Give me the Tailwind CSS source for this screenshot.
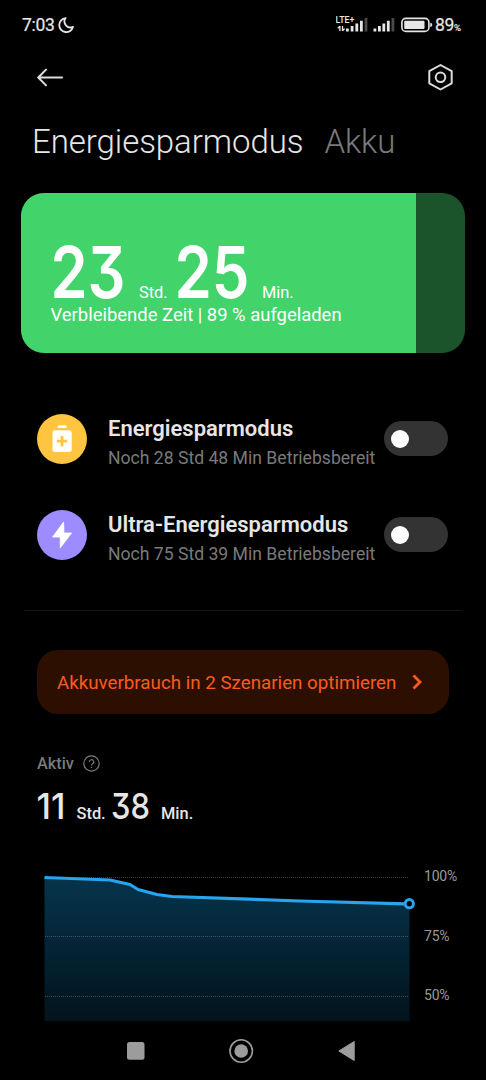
<!DOCTYPE html>
<html lang="de">
  <head>
    <meta charset="UTF-8" />
    <meta name="viewport" content="width=device-width, initial-scale=1.0" />
    <title>Energiesparmodus</title>
    <script src="https://cdn.jsdelivr.net/npm/@tailwindcss/browser@4"></script>
  </head>
  <body class="bg-black">
    <div class="w-[486px] h-[1080px] overflow-hidden bg-black text-[#e6e6e6] font-['Roboto',sans-serif] whitespace-nowrap flex flex-col">
      <!-- Status bar -->
      <div class="h-[50px] shrink-0 flex items-center pl-[22px]">
        <span class="text-[17.5px] tracking-[-0.3px] leading-none w-[36px] pt-[2px] [-webkit-text-stroke:0.2px_#e6e6e6]">7:03</span>
        <svg class="w-4 h-4 mt-[-1px]" viewBox="0 0 16 16" fill="none" stroke="#e6e6e6" stroke-width="1.8" stroke-linejoin="round">
          <path d="M7.6 1.1A7 7 0 1 0 15 9.8A5.9 5.9 0 0 1 7.6 1.1Z" />
        </svg>
        <svg class="w-[60px] h-[20px] ml-[262px]" viewBox="0 0 60 20" fill="#e6e6e6">
          <text x="-0.5" y="7.6" font-size="8.6" textLength="19" lengthAdjust="spacingAndGlyphs" font-family="Roboto" font-weight="500">LTE+</text>
          <path d="M3.9 11v5M6.5 11v5M1.8 13.4l2-2.2M8.6 13.6l-2 2.2" fill="none" stroke="#e6e6e6" stroke-width="1.3" />
          <path d="M10 13.5h2.8v3H10zM14.7 11h2.8v5.5h-2.8zM19.4 8.5h2.8v8h-2.8zM24 5.8h2.8v10.7H24z" />
          <path d="M28.6 3h2.8v13.5h-2.8z" fill="#4a4a4a" />
          <path d="M37.5 13.5h2.8v3h-2.8zM42 11h2.8v5.5H42zM46.4 8.5h2.8v8h-2.8zM50.9 5.8h2.8v10.7h-2.8z" />
          <path d="M55.5 3h2.8v13.5h-2.8z" fill="#4a4a4a" />
        </svg>
        <svg class="w-[32px] h-[16px] ml-[5px] mt-[-1px]" viewBox="0 0 32 16">
          <rect x="0.9" y="1.4" width="27" height="13" rx="4" fill="none" stroke="#e6e6e6" stroke-width="1.6" />
          <rect x="3.2" y="3.8" width="20.3" height="8.3" rx="1" fill="#e6e6e6" />
          <path d="M29.8 6.2a2 2 0 0 1 0 3.4z" fill="#e6e6e6" stroke="#e6e6e6" />
        </svg>
        <span class="text-[17.5px] tracking-[-0.4px] leading-none ml-[2px] pt-[2px] [-webkit-text-stroke:0.2px_#e6e6e6]">89<span class="text-[9.5px]">%</span></span>
      </div>

      <!-- App bar -->
      <div class="h-[54px] shrink-0 flex items-center justify-between pl-[37px] pr-[32px]">
        <svg class="w-[27px] h-[20px]" viewBox="0 0 27 20" fill="none" stroke="#dcdcdc" stroke-width="2" stroke-linecap="round" stroke-linejoin="round">
          <path d="M25 10.5H1.2M9 2.6L1.2 10.5L9 18.4" />
        </svg>
        <svg class="w-[27px] h-[28px]" viewBox="0 0 27 28" fill="none" stroke="#dcdcdc" stroke-width="2" stroke-linejoin="round">
          <path d="M13.5 2L24.7 8.2V20.3L13.5 26.5L2.3 20.3V8.2Z" />
          <circle cx="13.5" cy="14.3" r="4.8" />
        </svg>
      </div>

      <!-- Tabs -->
      <div class="h-[75px] shrink-0 mb-[14px] flex items-center pl-[32px] gap-[21px] text-[33px] tracking-[-0.06px] leading-none font-light">
        <span>Energiesparmodus</span>
        <span class="text-[#7a7a7a]">Akku</span>
      </div>

      <!-- Remaining time -->
      <div class="h-[160px] w-[444px] shrink-0 ml-[21px] rounded-[23px] overflow-hidden flex bg-[#1b542b] text-white">
        <div class="w-[395px] bg-[#42d46a] pl-[30px] pt-[43px]">
          <div class="h-[69px] flex items-baseline leading-[68px]">
            <svg class="w-[76px] h-[62px] overflow-visible" viewBox="0 0 76 62" fill="#fff">
              <text x="-0.5" y="62" font-size="71.5" font-weight="600" font-family="Inter" textLength="75" lengthAdjust="spacingAndGlyphs" style="font-feature-settings: 'cv09', 'ss01'">23</text>
            </svg>
            <span class="text-[16.4px] w-[48px] pl-[12px]">Std.</span>
            <svg class="w-[76px] h-[62px] overflow-visible" viewBox="0 0 76 62" fill="#fff">
              <text x="-0.5" y="62" font-size="71.5" font-weight="600" font-family="Inter" textLength="75" lengthAdjust="spacingAndGlyphs">25</text>
            </svg>
            <span class="text-[16.4px] pl-[11px]">Min.</span>
          </div>
          <div class="text-[18.45px] leading-[21px] ml-[-0.5px]">Verbleibende Zeit | 89 % aufgeladen</div>
        </div>
      </div>

      <!-- Saver modes -->
      <div class="mt-[38px] shrink-0 pl-[37px] pr-[38px]">
        <div class="h-[96px] flex items-center">
          <svg class="w-[50px] h-[50px]" viewBox="0 0 50 50">
            <circle cx="25" cy="25" r="25" fill="#ffc440" />
            <rect x="20.6" y="11.3" width="9" height="2.8" rx="1" fill="#fff" />
            <rect x="15.5" y="16.3" width="19.2" height="21.7" rx="2.5" fill="#fff" />
            <path d="M25 22v10.4M19.8 27.2h10.4" stroke="#ffc440" stroke-width="2.8" />
          </svg>
          <div class="ml-[21px] pt-[9px]">
            <div class="text-[22px] leading-[30px] font-semibold">Energiesparmodus</div>
            <div class="text-[17.6px] leading-[29px] text-[#7a7a7a]">Noch 28 Std 48 Min Betriebsbereit</div>
          </div>
          <div class="w-[64px] h-[35px] rounded-full bg-[#333] ml-auto mt-[-1px] flex items-center pl-[6.5px]">
            <div class="w-[18px] h-[18px] rounded-full bg-white"></div>
          </div>
        </div>
        <div class="h-[96px] flex items-center">
          <svg class="w-[50px] h-[50px]" viewBox="0 0 50 50">
            <circle cx="25" cy="25" r="25" fill="#9d8cff" />
            <path d="M26.6 12L15.6 27h7.6v11l11.4-15h-7.6z" fill="#fff" stroke="#fff" stroke-width="0.8" stroke-linejoin="round" />
          </svg>
          <div class="ml-[21px] pt-[9px]">
            <div class="text-[22px] leading-[30px] font-semibold">Ultra-Energiesparmodus</div>
            <div class="text-[17.6px] leading-[29px] text-[#7a7a7a]">Noch 75 Std 39 Min Betriebsbereit</div>
          </div>
          <div class="w-[64px] h-[35px] rounded-full bg-[#333] ml-auto mt-[-1px] flex items-center pl-[6.5px]">
            <div class="w-[18px] h-[18px] rounded-full bg-white"></div>
          </div>
        </div>
      </div>
      <div class="h-px shrink-0 mt-[27px] ml-[24px] mr-[24px] bg-[#161616]"></div>

      <!-- Optimise banner -->
      <div class="h-[64px] w-[412px] shrink-0 mt-[39px] ml-[37px] rounded-[21px] bg-[#2d0f01] text-[#fb5a1e] flex items-center pl-[20px]">
        <span class="text-[18.75px] leading-none pt-[2px]">Akkuverbrauch in 2 Szenarien optimieren</span>
        <svg class="w-[10px] h-[16px] ml-[16px]" viewBox="0 0 10 16" fill="none" stroke="#fb5a1e" stroke-width="2.8">
          <path d="M1.5 1.5L8 8L1.5 14.5" />
        </svg>
      </div>

      <!-- Screen-on time -->
      <div class="shrink-0 mt-[38px] pl-[37px]">
        <div class="h-[23px] flex items-center text-[#7a7a7a]">
          <span class="text-[16.3px] leading-none font-medium w-[46px] pt-[2px]">Aktiv</span>
          <svg class="w-[17px] h-[17px] mt-[-1px]" viewBox="0 0 17 17" fill="none" stroke="#7a7a7a" stroke-width="1.2">
            <circle cx="8.5" cy="8.5" r="7.7" />
            <path d="M6.3 6.9a2.2 2.2 0 1 1 3.3 1.9c-.8.5-1.1.8-1.1 1.7M8.5 11.7v1.3" />
          </svg>
        </div>
        <div class="h-[50px] mt-[14px] flex items-baseline leading-[50px]">
          <svg class="w-[30px] h-[30px] overflow-visible" viewBox="0 0 30 30" fill="#e6e6e6">
            <text x="-0.5" y="29.5" font-size="36" font-weight="500" font-family="Inter" textLength="29" lengthAdjust="spacingAndGlyphs">11</text>
          </svg>
          <span class="text-[16.4px] font-medium w-[44px] pl-[9.5px]">Std.</span>
          <svg class="w-[40px] h-[30px] overflow-visible" viewBox="0 0 40 30" fill="#e6e6e6">
            <text x="0" y="29.5" font-size="36" font-weight="500" font-family="Inter" textLength="39" lengthAdjust="spacingAndGlyphs" style="font-feature-settings: 'cv09', 'ss01'">38</text>
          </svg>
          <span class="text-[16.4px] font-medium pl-[10px]">Min.</span>
        </div>
      </div>

      <!-- Battery level chart -->
      <div class="shrink-0 mt-[21px] h-[161px] flex pl-[44px]">
        <svg class="w-[380px] h-[161px]" viewBox="44 860 380 161">
          <defs>
            <linearGradient id="level" x1="0" y1="877" x2="0" y2="1021" gradientUnits="userSpaceOnUse">
              <stop offset="0" stop-color="#06344c" />
              <stop offset="1" stop-color="#02131c" />
            </linearGradient>
          </defs>
          <path d="M44.5 877.5L110 880L130 884.5L138 889.5L157 894.5L172 896.5L409.5 904V1021H44.5Z" fill="url(#level)" />
          <path d="M45 877.5H409M45 936.5H409M45 996.5H409" stroke="#fff" stroke-opacity="0.22" stroke-dasharray="1 1" />
          <path d="M44.5 877.5L110 880L130 884.5L138 889.5L157 894.5L172 896.5L300 901L405 903.8" fill="none" stroke="#27a5ee" stroke-width="3.2" stroke-linejoin="round" />
          <circle cx="409.3" cy="903.7" r="4.1" fill="#000" stroke="#27a5ee" stroke-width="3" />
        </svg>
        <div class="flex flex-col text-[14px] leading-[18px] gap-[41.5px] pt-[7px] text-[#999] tracking-[-0.2px]">
          <span>100%</span>
          <span>75%</span>
          <span>50%</span>
        </div>
      </div>

      <!-- System navigation -->
      <div class="h-[59px] shrink-0 flex items-center pl-[126px]">
        <svg class="w-[230px] h-[26px]" viewBox="0 0 230 26" fill="#9c9c9c">
          <rect x="1" y="4" width="17.5" height="17.8" rx="2.5" />
          <circle cx="115.2" cy="13" r="11.2" fill="none" stroke="#9c9c9c" stroke-width="1.6" />
          <circle cx="115.2" cy="13" r="6.8" />
          <path d="M212.8 13L228.2 3.5V22.5Z" stroke="#9c9c9c" stroke-linejoin="round" />
        </svg>
      </div>
    </div>
  </body>
</html>
